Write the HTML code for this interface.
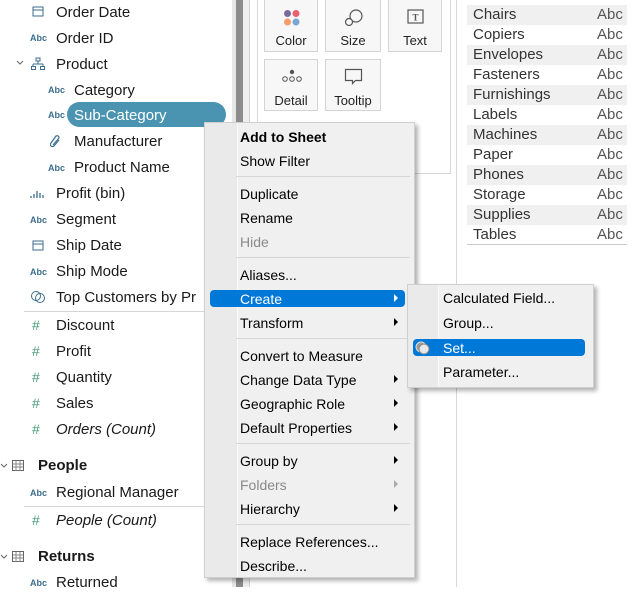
<!DOCTYPE html>
<html><head><meta charset="utf-8"><style>
*{margin:0;padding:0;box-sizing:border-box}
body{width:637px;height:587px;overflow:hidden;background:#fff;font-family:"Liberation Sans",sans-serif;position:relative;color:#1a1a1a}
.a{position:absolute;white-space:nowrap}
.f{font-size:15px;line-height:18px}
.ic{font-size:9px;color:#3b6e8f;font-weight:bold;line-height:10px}
.h{font-size:14px;color:#4a9a7a;line-height:14px}
.m{font-size:14px;line-height:16px;color:#000}
.sep{position:absolute;height:1px;background:#d6d6d6}
.arr{position:absolute;width:0;height:0;border-top:4px solid transparent;border-bottom:4px solid transparent;border-left:4px solid #000}
.t{font-size:15px;line-height:20px;height:20px;width:160px;left:467px;padding-left:6px;color:#333}
.t span{position:absolute;left:130px;color:#555}
.btn{position:absolute;border:1px solid #d4d4d4;background:#f7f7f7;font-size:13px;text-align:center;color:#222}
</style></head><body>
<svg class="a" style="left:32px;top:5px" width="12" height="12"><rect x="1" y="2" width="10" height="9" fill="none" stroke="#3b6e8f"/><line x1="1" y1="5" x2="11" y2="5" stroke="#3b6e8f"/></svg>
<div class="a f" style="left:56px;top:4px">Order Date</div>
<div class="a ic" style="left:30px;top:33px">Abc</div><div class="a f" style="left:56px;top:30px">Order ID</div>
<svg class="a" style="left:16px;top:60px" width="8" height="6"><path d="M1 1l3 3 3-3" stroke="#666" fill="none"/></svg>
<svg class="a" style="left:31px;top:57px" width="14" height="14"><rect x="5" y="1" width="4" height="3" fill="none" stroke="#3b6e8f"/><path d="M7 4v3M2 7h10M2 7v2M12 7v2" stroke="#3b6e8f" fill="none"/><rect x="0.5" y="9.5" width="4" height="3" fill="none" stroke="#3b6e8f"/><rect x="9.5" y="9.5" width="4" height="3" fill="none" stroke="#3b6e8f"/></svg>
<div class="a f" style="left:56px;top:56px">Product</div>
<div class="a ic" style="left:48px;top:85px">Abc</div><div class="a f" style="left:74px;top:82px">Category</div>
<div class="a" style="left:67px;top:102px;width:159px;height:25px;border-radius:13px;background:#4b94b1"></div>
<div class="a ic" style="left:48px;top:110px">Abc</div><div class="a f" style="left:74px;top:107px;color:#fff">Sub-Category</div>
<svg class="a" style="left:50px;top:135px" width="12" height="12"><path d="M3 10 L9 3 A2 2 0 0 0 6 1 L1 8 A2 2 0 0 0 4 11 L9 5" stroke="#3b6e8f" fill="none" stroke-width="1.2"/></svg>
<div class="a f" style="left:74px;top:133px">Manufacturer</div>
<div class="a ic" style="left:48px;top:163px">Abc</div><div class="a f" style="left:74px;top:159px">Product Name</div>
<svg class="a" style="left:30px;top:187px" width="16" height="12"><path d="M1 11v-2M4 11v-4M7 11v-7M10 11v-5M13 11v-3" stroke="#3b6e8f" stroke-width="1.3"/></svg>
<div class="a f" style="left:56px;top:185px">Profit (bin)</div>
<div class="a ic" style="left:30px;top:215px">Abc</div><div class="a f" style="left:56px;top:211px">Segment</div>
<svg class="a" style="left:32px;top:239px" width="12" height="12"><rect x="1" y="2" width="10" height="9" fill="none" stroke="#3b6e8f"/><line x1="1" y1="5" x2="11" y2="5" stroke="#3b6e8f"/></svg>
<div class="a f" style="left:56px;top:237px">Ship Date</div>
<div class="a ic" style="left:30px;top:267px">Abc</div><div class="a f" style="left:56px;top:263px">Ship Mode</div>
<svg class="a" style="left:30px;top:290px" width="16" height="14"><circle cx="6" cy="6" r="4.5" fill="none" stroke="#3b6e8f"/><circle cx="10" cy="8" r="4.5" fill="none" stroke="#3b6e8f"/></svg>
<div class="a f" style="left:56px;top:289px">Top Customers by Pr</div>
<div class="sep" style="left:24px;top:311px;width:190px"></div>
<div class="a h" style="left:32px;top:318px">#</div><div class="a f" style="left:56px;top:317px">Discount</div>
<div class="a h" style="left:32px;top:344px">#</div><div class="a f" style="left:56px;top:343px">Profit</div>
<div class="a h" style="left:32px;top:370px">#</div><div class="a f" style="left:56px;top:369px">Quantity</div>
<div class="a h" style="left:32px;top:396px">#</div><div class="a f" style="left:56px;top:395px">Sales</div>
<div class="a h" style="left:32px;top:422px">#</div><div class="a f" style="left:56px;top:421px;font-style:italic">Orders (Count)</div>
<svg class="a" style="left:0;top:463px" width="8" height="6"><path d="M1 1l3 3 3-3" stroke="#666" fill="none"/></svg>
<svg class="a" style="left:12px;top:460px" width="12" height="11"><rect x="0.5" y="0.5" width="11" height="10" fill="none" stroke="#666"/><path d="M1 4h10M1 7h10M4 1v10M8 1v10" stroke="#888"/></svg>
<div class="a f" style="left:38px;top:457px;font-weight:bold">People</div>
<div class="a ic" style="left:30px;top:488px">Abc</div><div class="a f" style="left:56px;top:484px">Regional Manager</div>
<div class="sep" style="left:24px;top:506px;width:190px"></div>
<div class="a h" style="left:32px;top:513px">#</div><div class="a f" style="left:56px;top:512px;font-style:italic">People (Count)</div>
<svg class="a" style="left:0;top:554px" width="8" height="6"><path d="M1 1l3 3 3-3" stroke="#666" fill="none"/></svg>
<svg class="a" style="left:12px;top:551px" width="12" height="11"><rect x="0.5" y="0.5" width="11" height="10" fill="none" stroke="#666"/><path d="M1 4h10M1 7h10M4 1v10M8 1v10" stroke="#888"/></svg>
<div class="a f" style="left:38px;top:548px;font-weight:bold">Returns</div>
<div class="a ic" style="left:30px;top:578px">Abc</div><div class="a f" style="left:56px;top:574px">Returned</div>

<div class="a" style="left:232px;top:0;width:4px;height:587px;background:#e6e6e6"></div>
<div class="a" style="left:236px;top:0;width:7px;height:587px;background:#8c8c8c"></div>
<div class="a" style="left:243px;top:0;width:7px;height:587px;background:#efefef"></div>
<div class="a" style="left:249px;top:0;width:1px;height:587px;background:#d0d0d0"></div>
<div class="a" style="left:257px;top:0;width:194px;height:174px;border:1px solid #d8d8d8;border-top:none;background:#fff"></div>
<div class="a" style="left:456px;top:0;width:1px;height:587px;background:#d8d8d8"></div>
<div class="btn" style="left:264px;top:-1px;width:54px;height:53px">
<svg style="position:absolute;left:18px;top:9px" width="18" height="18"><circle cx="4.5" cy="4.5" r="3.5" fill="#7b6a9c"/><circle cx="13" cy="4.5" r="3.5" fill="#e8616d"/><circle cx="4.5" cy="13" r="3.5" fill="#f49c6c"/><circle cx="13" cy="13" r="3.5" fill="#7ba5d0"/></svg>
<div style="position:absolute;left:0;right:0;top:33px">Color</div></div>
<div class="btn" style="left:325px;top:-1px;width:56px;height:53px">
<svg style="position:absolute;left:18px;top:9px" width="20" height="18"><circle cx="12" cy="7" r="6" fill="none" stroke="#555" stroke-width="1.2"/><circle cx="5" cy="13" r="3.5" fill="#f7f7f7" stroke="#555" stroke-width="1.2"/></svg>
<div style="position:absolute;left:0;right:0;top:33px">Size</div></div>
<div class="btn" style="left:388px;top:-1px;width:54px;height:53px">
<svg style="position:absolute;left:18px;top:9px" width="18" height="16"><rect x="1" y="1" width="15" height="13" fill="none" stroke="#555" stroke-width="1.2"/><text x="8.5" y="11.5" font-size="9" font-weight="bold" text-anchor="middle" fill="#555" font-family="Liberation Serif">T</text></svg>
<div style="position:absolute;left:0;right:0;top:33px">Text</div></div>
<div class="btn" style="left:264px;top:59px;width:54px;height:52px">
<svg style="position:absolute;left:16px;top:9px" width="22" height="14"><circle cx="11" cy="3" r="2.2" fill="#555"/><circle cx="4" cy="10" r="2.3" fill="none" stroke="#555"/><circle cx="11" cy="10" r="2.3" fill="none" stroke="#555"/><circle cx="18" cy="10" r="2.3" fill="none" stroke="#555"/></svg>
<div style="position:absolute;left:0;right:0;top:33px">Detail</div></div>
<div class="btn" style="left:325px;top:59px;width:56px;height:52px">
<svg style="position:absolute;left:18px;top:8px" width="20" height="18"><path d="M1.5 1.5h16v11h-6l-3 3v-3h-7z" fill="none" stroke="#555" stroke-width="1.2"/></svg>
<div style="position:absolute;left:0;right:0;top:33px">Tooltip</div></div>

<div class="a t" style="top:5px;background:#f0f0f0">Chairs<span>Abc</span></div>
<div class="a t" style="top:25px">Copiers<span>Abc</span></div>
<div class="a t" style="top:45px;background:#f0f0f0">Envelopes<span>Abc</span></div>
<div class="a t" style="top:65px">Fasteners<span>Abc</span></div>
<div class="a t" style="top:85px;background:#f0f0f0">Furnishings<span>Abc</span></div>
<div class="a t" style="top:105px">Labels<span>Abc</span></div>
<div class="a t" style="top:125px;background:#f0f0f0">Machines<span>Abc</span></div>
<div class="a t" style="top:145px">Paper<span>Abc</span></div>
<div class="a t" style="top:165px;background:#f0f0f0">Phones<span>Abc</span></div>
<div class="a t" style="top:185px">Storage<span>Abc</span></div>
<div class="a t" style="top:205px;background:#f0f0f0">Supplies<span>Abc</span></div>
<div class="a t" style="top:225px">Tables<span>Abc</span></div>
<div class="a" style="left:467px;top:244px;width:160px;height:1px;background:#ccc"></div>

<div class="a" style="left:204px;top:122px;width:211px;height:456px;background:#f0f0f0;border:1px solid #d0d0d0;box-shadow:3px 3px 4px rgba(0,0,0,.3)">
<div style="position:absolute;left:0;top:0;width:32px;height:100%;background:#eaeaea"></div>
<div style="position:absolute;left:32px;top:0;width:1px;height:100%;background:#fafafa"></div>
</div>
<div class="sep" style="left:236px;top:176px;width:174px"></div>
<div class="sep" style="left:236px;top:257px;width:174px"></div>
<div class="sep" style="left:236px;top:338px;width:174px"></div>
<div class="sep" style="left:236px;top:443px;width:174px"></div>
<div class="sep" style="left:236px;top:524px;width:174px"></div>
<div class="a" style="left:210px;top:290px;width:195px;height:17px;border-radius:4px;background:#0078d7"></div>
<div class="a m" style="left:240px;top:129px;font-weight:bold">Add to Sheet</div>
<div class="a m" style="left:240px;top:153px">Show Filter</div>
<div class="a m" style="left:240px;top:186px">Duplicate</div>
<div class="a m" style="left:240px;top:210px">Rename</div>
<div class="a m" style="left:240px;top:234px;color:#8a8a8a">Hide</div>
<div class="a m" style="left:240px;top:267px">Aliases...</div>
<div class="a m" style="left:240px;top:291px;color:#fff">Create</div>
<div class="a m" style="left:240px;top:315px">Transform</div>
<div class="a m" style="left:240px;top:348px">Convert to Measure</div>
<div class="a m" style="left:240px;top:372px">Change Data Type</div>
<div class="a m" style="left:240px;top:396px">Geographic Role</div>
<div class="a m" style="left:240px;top:420px">Default Properties</div>
<div class="a m" style="left:240px;top:453px">Group by</div>
<div class="a m" style="left:240px;top:477px;color:#8a8a8a">Folders</div>
<div class="a m" style="left:240px;top:501px">Hierarchy</div>
<div class="a m" style="left:240px;top:534px">Replace References...</div>
<div class="a m" style="left:240px;top:558px">Describe...</div>
<div class="arr" style="left:394px;top:294px;border-left-color:#fff"></div>
<div class="arr" style="left:394px;top:318px"></div>
<div class="arr" style="left:394px;top:375px"></div>
<div class="arr" style="left:394px;top:399px"></div>
<div class="arr" style="left:394px;top:423px"></div>
<div class="arr" style="left:394px;top:456px"></div>
<div class="arr" style="left:394px;top:480px;border-left-color:#aaa"></div>
<div class="arr" style="left:394px;top:504px"></div>

<div class="a" style="left:407px;top:284px;width:187px;height:104px;background:#f0f0f0;border:1px solid #d0d0d0;box-shadow:3px 3px 4px rgba(0,0,0,.3)">
<div style="position:absolute;left:0;top:0;width:30px;height:100%;background:#eaeaea"></div>
<div style="position:absolute;left:30px;top:0;width:1px;height:100%;background:#fafafa"></div>
</div>
<div class="a" style="left:413px;top:339px;width:172px;height:17px;border-radius:4px;background:#0078d7"></div>
<svg class="a" style="left:415px;top:340px" width="16" height="16"><circle cx="6" cy="7" r="5" fill="#9a9a9a" stroke="#ddd"/><circle cx="9" cy="9" r="5" fill="#e8e8e8" stroke="#888"/></svg>
<div class="a m" style="left:443px;top:290px">Calculated Field...</div>
<div class="a m" style="left:443px;top:315px">Group...</div>
<div class="a m" style="left:443px;top:340px;color:#fff">Set...</div>
<div class="a m" style="left:443px;top:364px">Parameter...</div>
</body></html>
